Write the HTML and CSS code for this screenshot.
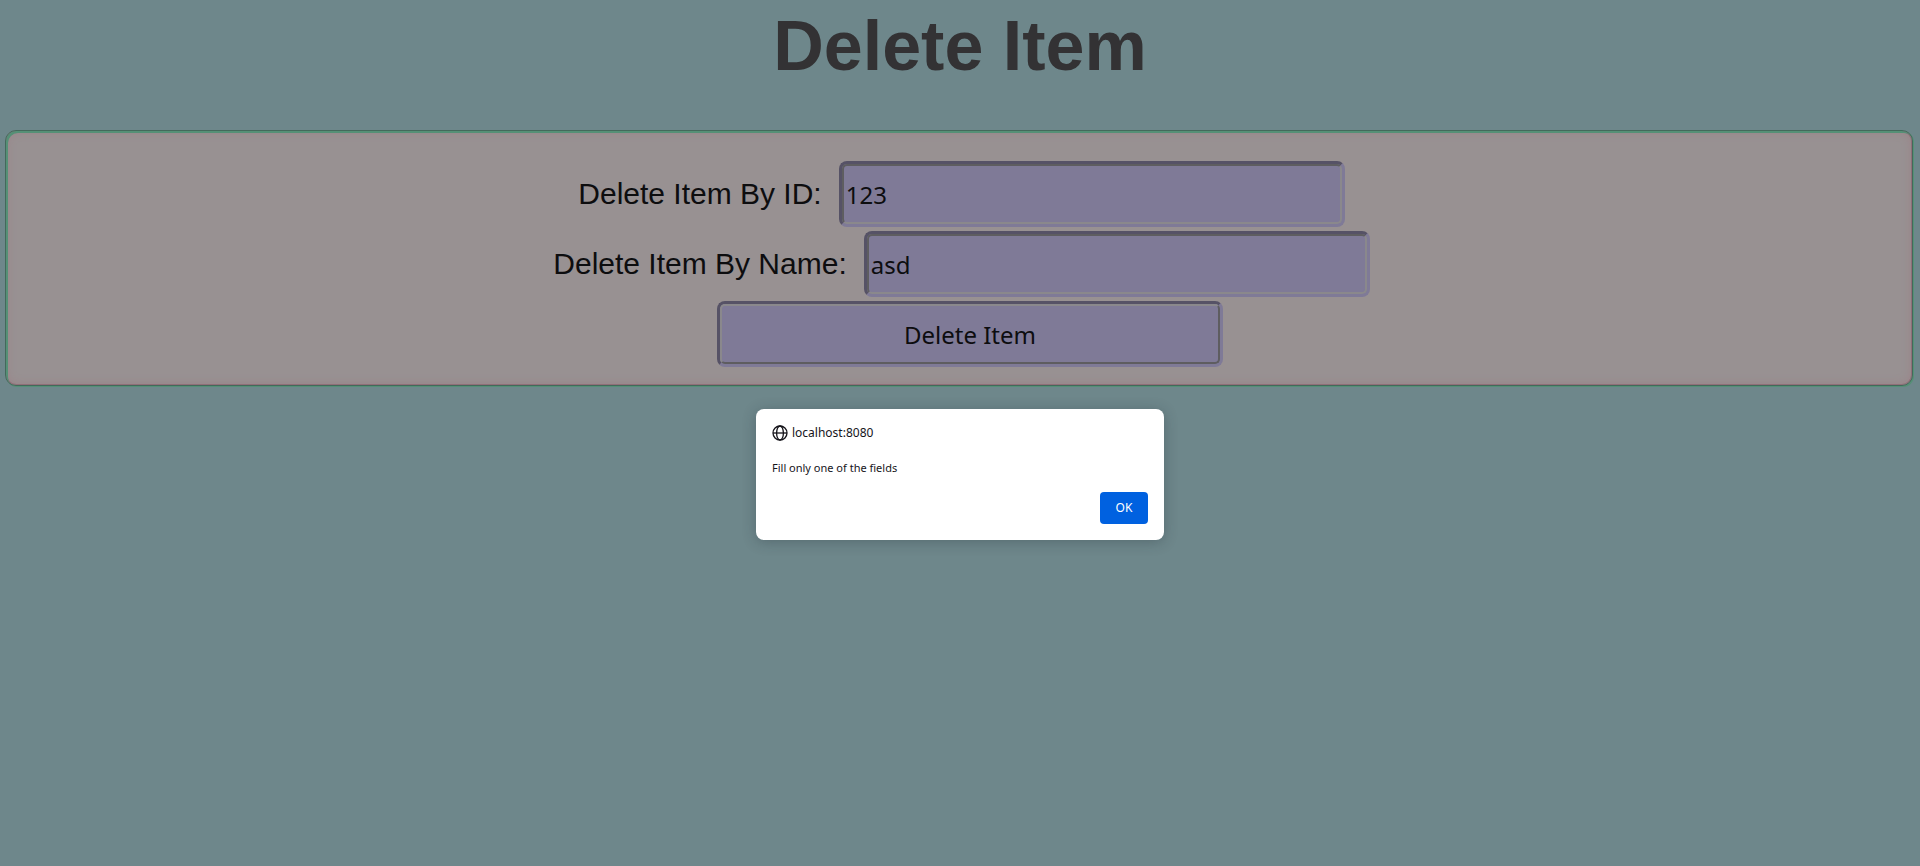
FILE: index.html
```html
<!DOCTYPE html>
<html lang="en">
<head>
<meta charset="utf-8">
<title>Delete Item</title>
<link rel="stylesheet" href="styles.css">
</head>
<body>
<h1 class="title">Delete Item</h1>
<form class="panel">
  <div class="row">
    <label class="label" for="item-id">Delete Item By ID:</label>
    <div class="frame"><input class="control" id="item-id" type="text" value="123"></div>
  </div>
  <div class="row">
    <label class="label" for="item-name">Delete Item By Name:</label>
    <div class="frame"><input class="control" id="item-name" type="text" value="asd"></div>
  </div>
  <div class="row">
    <div class="frame"><button class="control control-button" type="button">Delete Item</button></div>
  </div>
</form>
<div class="dialog" role="alertdialog" aria-labelledby="origin" aria-describedby="message">
  <div class="origin">
    <svg class="globe" viewBox="0 0 16 16" fill="none" stroke="currentColor" stroke-width="1.3" aria-hidden="true">
      <circle cx="8" cy="8" r="7"/>
      <ellipse cx="8" cy="8" rx="3.4" ry="7"/>
      <path d="M1 8h14"/>
    </svg>
    <span id="origin">localhost:8080</span>
  </div>
  <p class="message" id="message">Fill only one of the fields</p>
  <button class="ok" type="button">OK</button>
</div>
</body>
</html>
```
FILE: styles.css
```css
* {
  box-sizing: border-box;
}

body {
  margin: 0;
  background: #6e878b;
  color: #0d0d0f;
  font-family: "Liberation Sans", Arial, sans-serif;
}

.title {
  margin: 0 0 44px;
  padding-top: 6px;
  color: #333234;
  font-size: 70px;
  line-height: 80px;
  text-align: center;
}

.panel {
  display: flex;
  flex-direction: column;
  gap: 4px;
  margin: 5px 7px 5px 5px;
  padding: 30px 0 18px;
  border: 1px solid #43695b;
  border-radius: 11px;
  background: #989192;
  box-shadow:
    1px 1px 0 #559076,
    inset 2px 2px 0 #559076,
    inset 0 0 0 1px #8f6f78,
    inset 0 0 10px #9c7f86;
}

.row {
  display: flex;
  justify-content: center;
  align-items: center;
  padding-left: 5px;
}

.label {
  font-size: 30px;
}

.frame {
  width: 506px;
  height: 66px;
  margin-left: 17px;
  border: 3px solid;
  border-color: #565266 #7f7a97 #7f7a97 #565266;
  border-radius: 8px;
  background: #7f7a97;
}

.control {
  display: block;
  width: 100%;
  height: 100%;
  margin: 0;
  padding: 0 2px;
  border: 2px solid;
  border-color: #5e5d60 #8a888c #8a888c #5e5d60;
  border-radius: 5px;
  background: #7f7a97;
  color: #0d0d0f;
  font-family: "Noto Sans", Tahoma, sans-serif;
  font-size: 24px;
}

.control-button {
  border-color: #8a888c #5e5d60 #5e5d60 #8a888c;
}

.dialog {
  position: absolute;
  top: 409px;
  left: 50%;
  display: flex;
  flex-direction: column;
  width: 408px;
  padding: 16px;
  border-radius: 8px;
  background: #fff;
  box-shadow: 0 2px 14px rgba(30, 40, 50, 0.3);
  color: #15141a;
  font-family: "Noto Sans", "Segoe UI", sans-serif;
  font-size: 12px;
  line-height: 16px;
  transform: translateX(-50%);
}

.origin {
  display: flex;
  align-items: center;
  gap: 4px;
}

.globe {
  width: 16px;
  height: 16px;
}

.message {
  margin: 19px 0 16px;
  font-size: 11px;
}

.ok {
  align-self: flex-end;
  width: 48px;
  height: 32px;
  padding: 0;
  border: 0;
  border-radius: 4px;
  background: #0061e0;
  color: #fff;
  font: inherit;
}
```
